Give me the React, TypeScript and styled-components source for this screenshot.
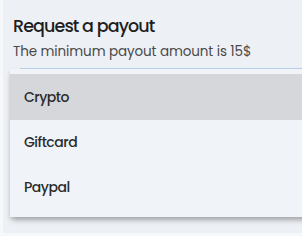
import React from "react";
import styled, { createGlobalStyle } from "styled-components";

const Global = createGlobalStyle`
  html, body { margin: 0; padding: 0; background: #f7f8fa; }
  body { font-family: "Poppins", "Inter", "Open Sans", sans-serif; }
  #root { width: 302px; height: 236px; overflow: hidden; }
`;

const Page = styled.div`
  width: 302px;
  height: 236px;
  padding-left: 3px;
  box-sizing: border-box;
  overflow: hidden;
`;

const Panel = styled.section`
  height: 233px;
  width: 320px;
  background: #edf0f4;
  padding: 15px 0 0 10px;
  box-sizing: border-box;
`;

const Title = styled.h2`
  margin: 0;
  font-size: 17.5px;
  letter-spacing: -0.9px;
  font-weight: 500;
  color: #1e1e1e;
  line-height: 22px;
`;

const Subtitle = styled.p`
  margin: 7px 0 0;
  font-size: 13.5px;
  letter-spacing: -0.1px;
  font-weight: 400;
  color: #4a4a4a;
  line-height: 16px;
`;

const Field = styled.div`
  position: relative;
  margin: 6px 0 0 7px;
  height: 2px;
  border-bottom: 1px solid #b9d3ee;
`;

const Menu = styled.ul`
  position: absolute;
  left: -10px;
  top: 3px;
  width: 320px;
  margin: 0;
  padding: 5px 0 7px;
  list-style: none;
  background: #f0f3f8;
  box-shadow: 0 5px 6px -2px rgba(0, 0, 0, 0.25), 0 2px 4px rgba(0, 0, 0, 0.12);
`;

const Item = styled.li<{ $active?: boolean; $h: number }>`
  height: ${(p) => p.$h}px;
  display: flex;
  align-items: center;
  padding-left: 14px;
  font-size: 14px;
  letter-spacing: -0.5px;
  font-weight: 500;
  color: #2b2b2b;
  background: ${(p) => (p.$active ? "#d5d7da" : "transparent")};
`;

export default function App() {
  return (
    <Page>
      <Global />
      <Panel>
        <Title>Request a payout</Title>
        <Subtitle>The minimum payout amount is 15$</Subtitle>
        <Field>
          <Menu>
            <Item $active $h={46}>Crypto</Item>
            <Item $h={45}>Giftcard</Item>
            <Item $h={45}>Paypal</Item>
          </Menu>
        </Field>
      </Panel>
    </Page>
  );
}
